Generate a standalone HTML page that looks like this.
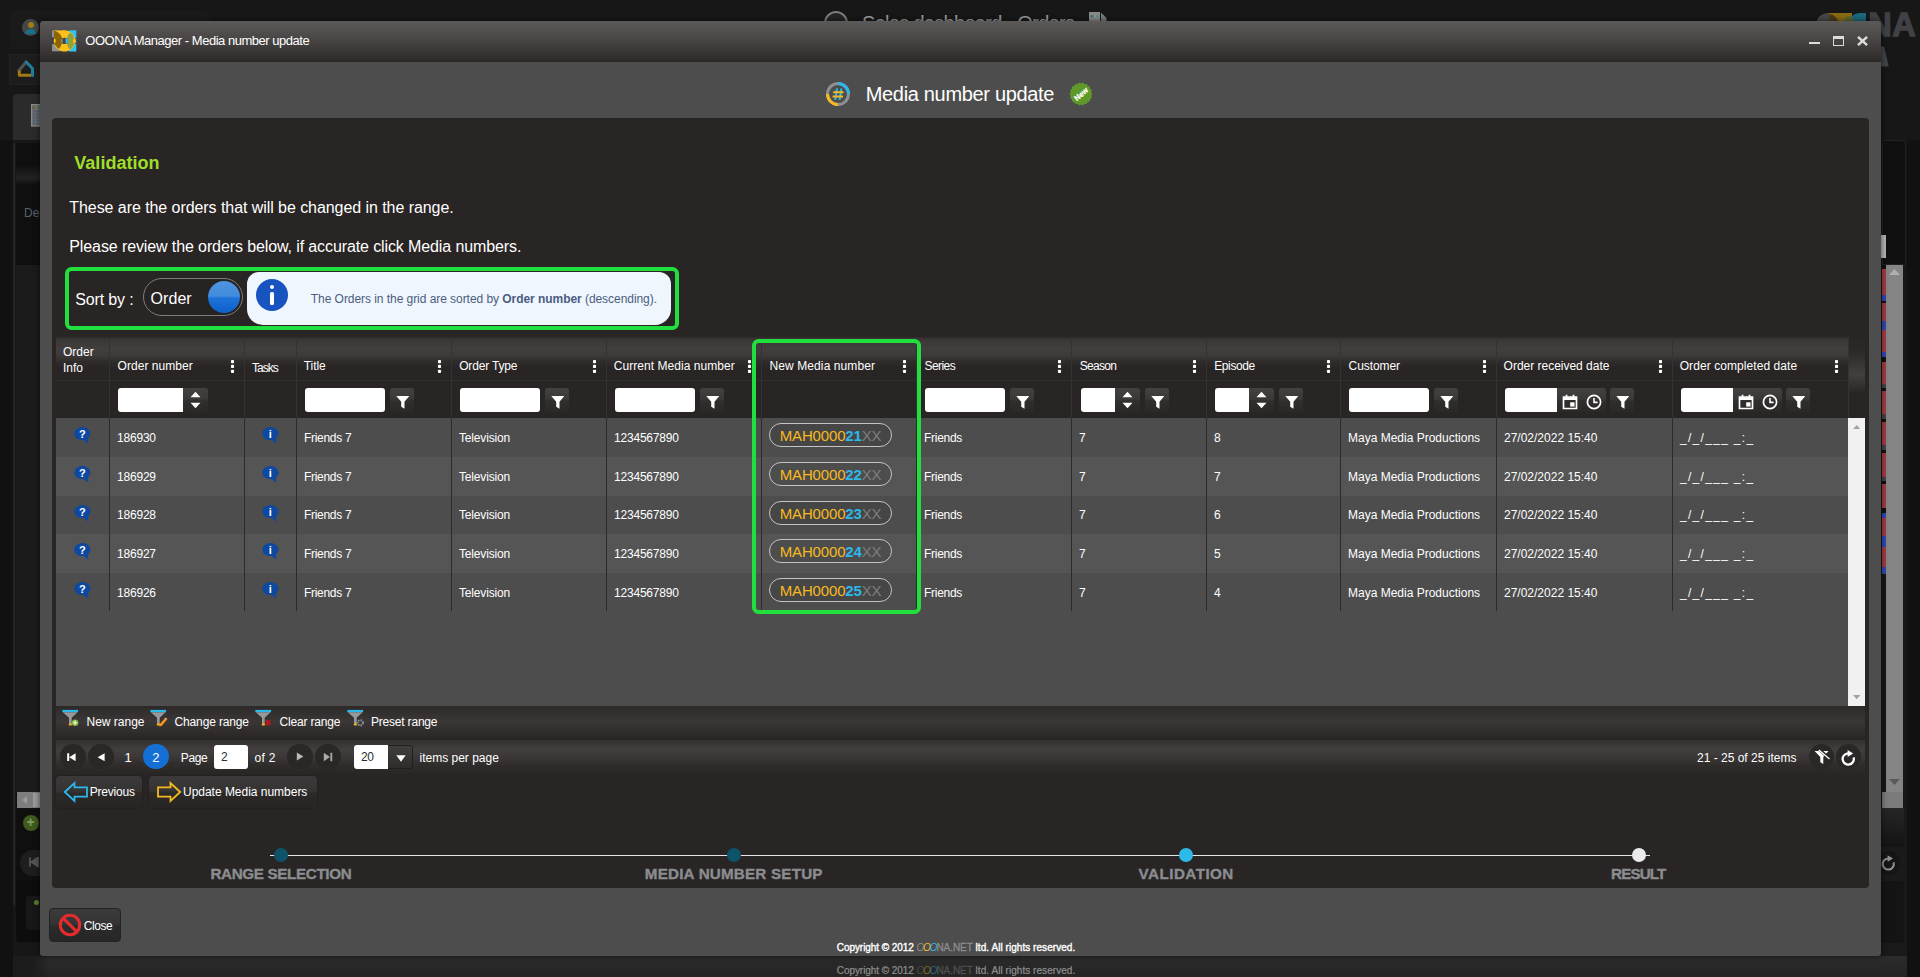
<!DOCTYPE html>
<html lang="en"><head><meta charset="utf-8"><title>OOONA Manager - Media number update</title>
<style>
html,body{margin:0;padding:0}
body{width:1920px;height:977px;overflow:hidden;background:#171717;font-family:"Liberation Sans",sans-serif;font-size:12px;color:#fff;position:relative;line-height:1}
div,span,svg{position:absolute;box-sizing:border-box}
span.t{white-space:pre;line-height:1}
b{font-weight:700}
.win{left:40px;top:21px;width:1841px;height:935px;background:#4d4d4d;border-radius:4px 4px 3px 3px;box-shadow:0 0 6px rgba(0,0,0,.6)}
.tbar{left:40px;top:21px;width:1841px;height:41px;border-radius:4px 4px 0 0;background:linear-gradient(#5c5a59 0%,#484544 45%,#2c2827 100%)}
.panel{left:52px;top:118px;width:1817px;height:770px;background:#292524;border-radius:4px}
.hdr{left:56px;top:337px;width:1809px;height:44px;background:linear-gradient(#2e2b2a 0%,#3b3837 7%,#413e3d 28%,#3d3a39 42%,#2f2c2b 56%,#292524 70%,#292524 100%)}
.frow{left:56px;top:381px;width:1809px;height:37px;background:#292524}
.content{left:56px;top:418px;width:1792px;height:288px;background:#4d4d4d}
.row{left:56px;width:1792px}
.vsb{left:1848px;top:418px;width:17px;height:288px;background:#f1f1f1}
.sep{width:1px;background:#2b2b2b}
.hsep{width:1px;background:#353231}
.h{font-size:12px;color:#fff}
.c{font-size:12px;color:#fff}
.inp{background:#fff;border-radius:3px;height:24px;top:388px}
.fb{width:24px;height:24px;top:388px;border-radius:3px;background:linear-gradient(#434241 0%,#3b3938 45%,#302e2d 55%,#2b2928 100%)}
.sp{width:25px;height:24px;top:388px;border-radius:0 3px 3px 0;background:linear-gradient(#434241 0%,#3b3938 45%,#302e2d 55%,#2b2928 100%)}
.pill{left:769px;width:123px;height:24px;border:1.3px solid #c4c4c4;border-radius:12px;background:rgba(0,0,0,.09)}
.pill span{font-size:15px;letter-spacing:-0.17px;left:9.8px;top:3.8px}
.s{position:static}.y{color:#f6b91f;position:static}.cy{color:#2cb8ea;position:static;font-weight:700}.gx{color:#7e7e7e;position:static}
.gbox{border:4.3px solid #21df3d;border-radius:6.5px}
.tool{left:56px;top:706px;width:1809px;height:34px;background:linear-gradient(#2c2928 0%,#3a3736 45%,#2e2b2a 80%,#282423 100%)}
.pager{left:56px;top:739.7px;width:1809px;height:35px;background:linear-gradient(#343130 0%,#413e3d 28%,#3c3938 45%,#2f2c2b 72%,#292524 100%)}
.pc{width:25.6px;height:25.6px;border-radius:50%;top:743.7px;background:#2a2726}
.btn{top:776px;height:31.5px;border-radius:4px;background:linear-gradient(#3b3939 0%,#363433 46%,#2c2a29 54%,#272423 100%);box-shadow:0 0 0 1px rgba(0,0,0,.12)}
.step{font-size:15.5px;font-weight:700;color:#8c8c8c;top:866px;letter-spacing:-0.3px}
.dot{width:14px;height:14px;border-radius:50%;top:848px}
</style></head>
<body>
<!-- dimmed page behind dialog -->
<div style="left:0;top:140px;width:13px;height:837px;background:#111"></div>
<div style="left:1907px;top:140px;width:13px;height:837px;background:#111"></div>
<div style="left:10px;top:10px;width:200px;height:40px;border-radius:8px;background:#1a1a1a"></div>
<div style="left:22px;top:19px;width:17px;height:17px;border-radius:50%;background:#454648"></div>
<div style="left:28px;top:22px;width:6px;height:6px;border-radius:50%;background:#a07a18"></div>
<div style="left:25px;top:29px;width:11px;height:5px;border-radius:5px 5px 0 0;background:#17718a"></div>
<div style="left:9px;top:54px;width:34px;height:31px;background:#1d1d1d;border:1px solid #222"></div>
<svg style="left:17px;top:60px" width="18" height="18" viewBox="0 0 18 18"><path d="M2 10.5L9.2 2" stroke="#4f5459" stroke-width="3" fill="none" stroke-linecap="round"/><path d="M9.2 2L15.5 8.5V15.5" stroke="#1f7f9c" stroke-width="3" fill="none" stroke-linejoin="round" stroke-linecap="round"/><path d="M2.3 10.5V15.3H14" stroke="#a07814" stroke-width="3" fill="none" stroke-linejoin="round"/></svg>
<div style="left:13px;top:94px;width:30px;height:46px;border-radius:4px 0 0 0;background:#2b2b2b"></div>
<svg style="left:30.5px;top:104px" width="10" height="23" viewBox="0 0 10 23"><rect x="0" y="0" width="10" height="22.6" fill="#8b8b8b"/><rect x="1" y="1" width="9" height="20.6" fill="#6f6f6f"/><rect x="1.6" y="2.8" width="2" height="2" fill="#55595e"/><rect x="4" y="2.8" width="2.4" height="2" fill="#a07814"/><rect x="6.8" y="2.8" width="3.2" height="2" fill="#1f7f9c"/><path d="M2 7.5H10M2 10.5H10M2 13.5H10M2 16.5H10M2 19.5H10" stroke="#4f5f74" stroke-width="1.8" stroke-dasharray="2.2 1"/></svg>
<div style="left:16px;top:143px;width:26px;height:762px;background:#0f0f0f;border-radius:3px 0 0 3px"></div>
<div style="left:16px;top:265px;width:26px;height:527px;background:#1b1b1b"></div>
<div style="left:13px;top:143px;width:2px;height:762px;background:#242424"></div>
<div style="left:16px;top:165px;width:26px;height:19px;background:linear-gradient(#101010,#232323 70%,#111)"></div>
<span class="t" style="left:24px;top:207px;font-size:12px;color:#56606e">De</span>
<div style="left:17px;top:792px;width:23px;height:16px;background:#7d7d7d"></div>
<svg style="left:21px;top:795px" width="8" height="10"><path d="M6 1 L1.5 5 L6 9Z" fill="#9c9c9c"/></svg>
<div style="left:33px;top:793px;width:7px;height:14px;background:#9a9a9a"></div>
<div style="left:23px;top:815px;width:16px;height:16px;border-radius:50%;background:#3e5a1e"></div>
<span class="t" style="left:26.5px;top:815px;font-size:14px;font-weight:700;color:#7f9a5a">+</span>
<div style="left:20px;top:850px;width:22px;height:26px;border-radius:13px 0 0 13px;background:#1e1e1e"></div>
<svg style="left:29px;top:857px" width="10" height="10"><path d="M1 0.5V9.5M9 0.5L2.5 5L9 9.5Z" stroke="#555" stroke-width="1.8" fill="#555"/></svg>
<div style="left:16px;top:880px;width:26px;height:62px;background:#0d0d0d;border-radius:0 0 0 4px"></div>
<div style="left:26px;top:896px;width:16px;height:34px;background:#181818;border-radius:3px 0 0 3px"></div>
<div style="left:34px;top:900px;width:5px;height:5px;border-radius:50%;background:#5c7a2c"></div>
<span class="t" style="left:862.0px;top:12.8px;font-size:20px;letter-spacing:-0.696px;color:#9a9a9a;">Sales dashboard - Orders</span>
<div style="left:824px;top:11px;width:24px;height:24px;border-radius:50%;border:2px solid #7c7c7c;background:#242424"></div>
<svg style="left:1088.5px;top:11.5px" width="18" height="12" viewBox="0 0 18 12"><path d="M0 0H11V12H0Z" fill="#8a8a8a"/><path d="M12 0.5L17.5 6V12H12Z" fill="#7a7a7a"/><rect x="1.5" y="3" width="3" height="2.4" fill="#4a6a8a"/><rect x="5" y="3" width="2" height="2.4" fill="#b8962a"/><rect x="7.4" y="3" width="2.4" height="2.4" fill="#2a9ac0"/></svg>
<div style="left:1815.8px;top:12.9px;width:16px;height:12px;border-radius:14px 0 0 0;background:#46484b"></div>
<div style="left:1829px;top:12.9px;width:23px;height:12px;background:#8a6a14"></div>
<div style="left:1829px;top:13.5px;width:9px;height:12px;border-radius:0 12px 0 0;background:#4a3c1c"></div>
<div style="left:1848px;top:12.9px;width:18.3px;height:12px;border-radius:12px 0 0 0;background:#1d697e"></div>
<div style="left:1844.5px;top:15.5px;width:8px;height:8px;border-radius:4px 4px 0 0;background:#5d6a28"></div>
<span class="t" style="left:1868.2px;top:9.3px;font-size:32.5px;font-weight:700;color:#3f4144;letter-spacing:0.6px;-webkit-text-stroke:1.3px #3f4144">NA</span>
<svg style="left:1881px;top:46px" width="10" height="22"><path d="M0 0.5H3L7.8 20.5H0Z" fill="#424447"/></svg>
<div style="left:1882px;top:140px;width:24px;height:125px;background:#101010;border:1px solid #222;border-radius:3px 3px 0 0"></div>
<div style="left:1881px;top:235px;width:5px;height:23px;background:#b5b5b5"></div>
<div style="left:1882px;top:265.2px;width:4px;height:3.4px;background:#111"></div>
<div style="left:1882px;top:268.6px;width:4px;height:26.4px;background:#a23b40"></div>
<div style="left:1882px;top:295.0px;width:4px;height:5.8px;background:#2e48b4"></div>
<div style="left:1882px;top:300.8px;width:4px;height:1.7px;background:#111"></div>
<div style="left:1882px;top:302.5px;width:4px;height:18.6px;background:#a23b40"></div>
<div style="left:1882px;top:321.1px;width:4px;height:9.2px;background:#2e48b4"></div>
<div style="left:1882px;top:330.3px;width:4px;height:21.4px;background:#a23b40"></div>
<div style="left:1882px;top:351.6px;width:4px;height:5.1px;background:#2e48b4"></div>
<div style="left:1882px;top:356.7px;width:4px;height:5.1px;background:#111"></div>
<div style="left:1882px;top:361.8px;width:4px;height:22.0px;background:#a23b40"></div>
<div style="left:1882px;top:383.8px;width:4px;height:4.1px;background:#444"></div>
<div style="left:1882px;top:387.9px;width:4px;height:2.7px;background:#111"></div>
<div style="left:1882px;top:390.6px;width:4px;height:23.7px;background:#a23b40"></div>
<div style="left:1882px;top:414.3px;width:4px;height:5.1px;background:#444"></div>
<div style="left:1882px;top:419.4px;width:4px;height:2.4px;background:#111"></div>
<div style="left:1882px;top:421.8px;width:4px;height:23.1px;background:#a23b40"></div>
<div style="left:1882px;top:444.8px;width:4px;height:5.1px;background:#444"></div>
<div style="left:1882px;top:449.9px;width:4px;height:3.4px;background:#111"></div>
<div style="left:1882px;top:453.3px;width:4px;height:23.7px;background:#a23b40"></div>
<div style="left:1882px;top:477.0px;width:4px;height:4.4px;background:#444"></div>
<div style="left:1882px;top:481.4px;width:4px;height:2.7px;background:#111"></div>
<div style="left:1882px;top:484.2px;width:4px;height:23.4px;background:#a23b40"></div>
<div style="left:1882px;top:507.5px;width:4px;height:5.1px;background:#111"></div>
<div style="left:1882px;top:512.6px;width:4px;height:5.1px;background:#2e48b4"></div>
<div style="left:1882px;top:517.7px;width:4px;height:18.6px;background:#a23b40"></div>
<div style="left:1882px;top:536.4px;width:4px;height:10.2px;background:#2e48b4"></div>
<div style="left:1882px;top:546.5px;width:4px;height:20.3px;background:#a23b40"></div>
<div style="left:1882px;top:566.9px;width:4px;height:6.8px;background:#2e48b4"></div>
<div style="left:1886px;top:265px;width:16.8px;height:543px;background:#858585"></div>
<div style="left:1882px;top:792.3px;width:20.8px;height:16px;background:#7b7b7b"></div>
<svg style="left:1889px;top:269px" width="11" height="6"><path d="M0 6L5.5 0L11 6Z" fill="#b0b0b0"/></svg>
<svg style="left:1889px;top:779px" width="11" height="6"><path d="M0 0L5.5 6L11 0Z" fill="#5a5a5a"/></svg>
<div style="left:1881px;top:808.3px;width:26px;height:148px;background:#1a1a1a"></div>
<div style="left:1881px;top:808.3px;width:23px;height:38.5px;background:linear-gradient(#262626,#141414)"></div>
<div style="left:1876px;top:851.3px;width:24px;height:24px;border-radius:50%;background:#151515"></div>
<svg style="left:1879.5px;top:854.5px" width="17" height="17" viewBox="0 0 17 17"><path d="M13.6 7.4A5.6 5.6 0 1 1 8 3.4" fill="none" stroke="#8f8f93" stroke-width="2"/><path d="M7.6 0.2L13 3.6L7.6 6.8Z" fill="#8f8f93"/></svg>
<div style="left:1881px;top:881px;width:22.5px;height:61.7px;background:#141414;border-radius:0 3px 3px 0"></div>
<div style="left:13px;top:956px;width:1894px;height:21px;background:linear-gradient(#2c2c2c,#242424)"></div>
<div style="left:13px;top:956px;width:36px;height:21px;background:linear-gradient(90deg,#1c1c1c 0%,#1d1d1d 60%,rgba(29,29,29,0) 100%)"></div>
<span class="t" style="left:836.8px;top:966px;font-size:10px;color:#909090;letter-spacing:-0.067px;-webkit-text-stroke:.2px #909090">Copyright © 2012 <i style="color:#4a4a4a;letter-spacing:-1.1px;-webkit-text-stroke:0">O<span class="y" style="color:#8a6a14">O</span><span class="y" style="color:#1d6d8a">O</span></i><span class="y" style="color:#505050;-webkit-text-stroke:.3px #505050">NA.NET</span><span class="s" style="letter-spacing:0.053px"> ltd. All rights reserved.</span></span>
<div class="win"></div><div class="tbar"></div>
<svg style="left:52px;top:30px" width="25" height="22" viewBox="0 0 25 22"><rect x="0" y="0.5" width="8" height="20.8" fill="#8d8f92"/><rect x="0" y="7.4" width="2.2" height="6.7" fill="#3e3d45"/><rect x="17" y="0.3" width="7.3" height="21.2" fill="#2cc6f5"/><rect x="22.6" y="8" width="1.7" height="6" fill="#3e3d45"/><circle cx="12.4" cy="10.9" r="10.7" fill="#fcc01f"/><path d="M2 0.5H12V8H2Z" fill="#fcc01f"/><path d="M2 0.6C7 2 10.2 6 10.2 9.8C10.2 14 8.5 17 6.8 18.9C4 16.5 2.2 14.5 2 13Z" fill="#8a6500"/><path d="M2 8.3C3.4 8.8 3.8 9.8 3.8 10.8C3.8 11.8 3.4 12.8 2 13.2Z" fill="#fcc01f"/><path d="M18.5 2.6C21.6 5 22.4 8.5 22.4 10.9C22.4 14 21.2 17.3 18.3 19.6C15.6 17.2 14.6 14 14.6 10.9C14.6 7.4 15.9 4.6 18.5 2.6Z" fill="#95a03a"/><ellipse cx="22.5" cy="10.9" rx="1.5" ry="2.6" fill="#fcc01f"/><ellipse cx="12.5" cy="10.95" rx="3.6" ry="3.15" fill="#4a4543"/><path d="M10.6 8.3A3.6 3.15 0 0 0 10.6 13.6Z" fill="#8d8f92"/><path d="M13.7 8A3.6 3.15 0 0 1 15.6 9.3C16 10.4 16 11.5 15.6 12.6A3.6 3.15 0 0 1 13.7 13.9Z" fill="#2cc6f5"/></svg>
<span class="t" style="left:85.3px;top:34px;font-size:13px;letter-spacing:-0.477px;">OOONA Manager - Media number update</span>
<div style="left:1809px;top:41.8px;width:11.1px;height:2.4px;background:#dcdcdc"></div>
<div style="left:1833px;top:36px;width:11.1px;height:9.9px;border:1.6px solid #dcdcdc;border-top-width:3px"></div>
<svg style="left:1857px;top:36px" width="11" height="10" viewBox="0 0 11 10"><path d="M1 0.9L10.1 9.1M10.1 0.9L1 9.1" stroke="#dcdcdc" stroke-width="2.5"/></svg>
<svg style="left:825px;top:82px" width="25" height="24" viewBox="0 0 25 24"><circle cx="13" cy="12.1" r="10.5" fill="none" stroke="#8d8f92" stroke-width="3"/><path d="M13 1.6A10.5 10.5 0 0 1 23.5 12.1" fill="none" stroke="#2cb8ea" stroke-width="3"/><path d="M13 22.6A10.5 10.5 0 0 1 2.5 12.1" fill="none" stroke="#f6b91f" stroke-width="3"/><path d="M12 6.3L10.2 17.9M16.4 6.3L14.6 17.9" stroke="#2cb8ea" stroke-width="2"/><path d="M8.2 10.2H18.6M7.6 14.4H18" stroke="#f6b91f" stroke-width="2"/></svg>
<span class="t" style="left:865.7px;top:83.5px;font-size:20px;letter-spacing:-0.321px;">Media number update</span>
<svg style="left:1069px;top:82px" width="24" height="24" viewBox="0 0 24 24"><polygon points="23.60,12.00 22.24,13.81 22.90,15.97 21.01,17.20 20.89,19.46 18.68,19.97 17.80,22.05 15.56,21.77 14.01,23.42 12.00,22.40 9.99,23.42 8.44,21.77 6.20,22.05 5.32,19.97 3.11,19.46 2.99,17.20 1.10,15.97 1.76,13.81 0.40,12.00 1.76,10.19 1.10,8.03 2.99,6.80 3.11,4.54 5.32,4.03 6.20,1.95 8.44,2.23 9.99,0.58 12.00,1.60 14.01,0.58 15.56,2.23 17.80,1.95 18.68,4.03 20.89,4.54 21.01,6.80 22.90,8.03 22.24,10.19" fill="#5f9a28"/><text x="12" y="14.8" transform="rotate(-42 12 12)" text-anchor="middle" font-family="Liberation Sans, sans-serif" font-size="7.6" font-weight="700" fill="#fff" stroke="#fff" stroke-width="0.3">New</text></svg>
<div class="panel"></div>
<span class="t" style="left:74.3px;top:154px;font-size:18px;letter-spacing:0.020px;font-weight:700;color:#9fdf2b;">Validation</span>
<span class="t" style="left:69.3px;top:200px;font-size:16px;letter-spacing:-0.063px;">These are the orders that will be changed in the range.</span>
<span class="t" style="left:69.3px;top:239px;font-size:16px;letter-spacing:-0.108px;">Please review the orders below, if accurate click Media numbers.</span>
<div class="gbox" style="left:65px;top:267px;width:614px;height:63px"></div>
<span class="t" style="left:75.3px;top:292px;font-size:16px;letter-spacing:-0.147px;">Sort by :</span>
<div style="left:143px;top:278px;width:100px;height:38px;border:1px solid #7d7d7d;border-radius:19px;background:#262322"></div>
<span class="t" style="left:150.5px;top:290.6px;font-size:16px;letter-spacing:0.075px;">Order</span>
<div style="left:208px;top:281px;width:32px;height:32px;border-radius:50%;background:linear-gradient(#4e95e1 0%,#418bda 47%,#1c73d7 53%,#0e62cb 100%)"></div>
<div style="left:247px;top:271.5px;width:424px;height:53.7px;background:#eff6fe;border-radius:12px 12px 16px 16px"></div>
<div style="left:256px;top:279px;width:32px;height:32px;border-radius:50%;background:#1754c0"></div>
<div style="left:270px;top:285px;width:4px;height:4px;border-radius:50%;background:#fff"></div>
<div style="left:270.2px;top:291.5px;width:3.6px;height:13px;border-radius:1.5px;background:#fff"></div>
<span class="t" style="left:310.8px;top:293px;font-size:12px;color:#4c5d80;letter-spacing:-0.053px">The Orders in the grid are sorted by <b>Order number</b> (descending).</span>
<div class="hdr"></div><div class="frow"></div>
<div style="left:56px;top:380px;width:1792px;height:1px;background:#302d2c"></div>
<div class="content"></div>
<div class="row" style="top:418px;height:39px;background:#4d4d4d"></div>
<div class="row" style="top:457px;height:39px;background:#555555"></div>
<div class="row" style="top:496px;height:38px;background:#4d4d4d"></div>
<div class="row" style="top:534px;height:39px;background:#555555"></div>
<div class="row" style="top:573px;height:38px;background:#4d4d4d"></div>
<div class="vsb"></div>
<svg style="left:1852.9px;top:425px" width="7.4" height="4.2" viewBox="0 0 7.4 4.2"><path d="M0 4.2L3.7 0L7.4 4.2Z" fill="#a3a3a3"/></svg>
<svg style="left:1852.9px;top:694.5px" width="7.4" height="4.2" viewBox="0 0 7.4 4.2"><path d="M0 0L3.7 4.2L7.4 0Z" fill="#a3a3a3"/></svg>
<div class="hsep" style="left:109px;top:337px;height:81px"></div>
<div class="sep" style="left:109px;top:418px;height:193px"></div>
<div class="hsep" style="left:244px;top:337px;height:81px"></div>
<div class="sep" style="left:244px;top:418px;height:193px"></div>
<div class="hsep" style="left:296px;top:337px;height:81px"></div>
<div class="sep" style="left:296px;top:418px;height:193px"></div>
<div class="hsep" style="left:451px;top:337px;height:81px"></div>
<div class="sep" style="left:451px;top:418px;height:193px"></div>
<div class="hsep" style="left:606px;top:337px;height:81px"></div>
<div class="sep" style="left:606px;top:418px;height:193px"></div>
<div class="hsep" style="left:761px;top:337px;height:81px"></div>
<div class="sep" style="left:761px;top:418px;height:193px"></div>
<div class="hsep" style="left:916px;top:337px;height:81px"></div>
<div class="sep" style="left:916px;top:418px;height:193px"></div>
<div class="hsep" style="left:1071px;top:337px;height:81px"></div>
<div class="sep" style="left:1071px;top:418px;height:193px"></div>
<div class="hsep" style="left:1206px;top:337px;height:81px"></div>
<div class="sep" style="left:1206px;top:418px;height:193px"></div>
<div class="hsep" style="left:1340px;top:337px;height:81px"></div>
<div class="sep" style="left:1340px;top:418px;height:193px"></div>
<div class="hsep" style="left:1496px;top:337px;height:81px"></div>
<div class="sep" style="left:1496px;top:418px;height:193px"></div>
<div class="hsep" style="left:1672px;top:337px;height:81px"></div>
<div class="sep" style="left:1672px;top:418px;height:193px"></div>
<div style="left:1848px;top:337px;width:17px;height:81px;background:linear-gradient(#292524 0%,#2c2928 18%,#423f3e 46%,#383534 56%,#292524 70%,#292524 100%)"></div>
<div class="hsep" style="left:1848px;top:337px;height:81px"></div>
<span class="t h" style="left:63px;top:344px;line-height:16.3px">Order<br>Info</span>
<span class="t" style="left:117.5px;top:359.5px;font-size:12px;letter-spacing:0.055px;">Order number</span>
<svg style="left:229.9px;top:360.2px" width="5" height="14" viewBox="0 0 5 14"><rect x="0.95" y="0" width="3.1" height="3.2" rx="0.9" fill="#fff"/><rect x="0.95" y="4.85" width="3.1" height="3.2" rx="0.9" fill="#fff"/><rect x="0.95" y="9.7" width="3.1" height="3.2" rx="0.9" fill="#fff"/></svg>
<div class="inp" style="left:118px;width:66px;border-radius:3px 0 0 3px"></div><div class="sp" style="left:183px"><svg style="left:7px;top:3px" width="11" height="18" viewBox="0 0 11 18"><path d="M0.5 6.2L5.5 0.8L10.5 6.2Z" fill="#fff"/><path d="M0.5 11.8L5.5 17.2L10.5 11.8Z" fill="#fff"/></svg></div>
<span class="t" style="left:252.0px;top:361.5px;font-size:12px;letter-spacing:-0.994px;">Tasks</span>
<span class="t" style="left:303.7px;top:359.5px;font-size:12px;letter-spacing:-0.031px;">Title</span>
<svg style="left:436.9px;top:360.2px" width="5" height="14" viewBox="0 0 5 14"><rect x="0.95" y="0" width="3.1" height="3.2" rx="0.9" fill="#fff"/><rect x="0.95" y="4.85" width="3.1" height="3.2" rx="0.9" fill="#fff"/><rect x="0.95" y="9.7" width="3.1" height="3.2" rx="0.9" fill="#fff"/></svg>
<div class="inp" style="left:305px;width:80px"></div><div class="fb" style="left:390px"><svg style="left:5.8px;top:7px" width="14" height="14" viewBox="0 0 14 14"><path d="M0.3 0.9H13.3L8.5 6.8V13.7L5.2 11.7V6.8Z" fill="#fff"/></svg></div>
<span class="t" style="left:459.2px;top:359.5px;font-size:12px;letter-spacing:-0.168px;">Order Type</span>
<svg style="left:591.9px;top:360.2px" width="5" height="14" viewBox="0 0 5 14"><rect x="0.95" y="0" width="3.1" height="3.2" rx="0.9" fill="#fff"/><rect x="0.95" y="4.85" width="3.1" height="3.2" rx="0.9" fill="#fff"/><rect x="0.95" y="9.7" width="3.1" height="3.2" rx="0.9" fill="#fff"/></svg>
<div class="inp" style="left:460px;width:80px"></div><div class="fb" style="left:545px"><svg style="left:5.8px;top:7px" width="14" height="14" viewBox="0 0 14 14"><path d="M0.3 0.9H13.3L8.5 6.8V13.7L5.2 11.7V6.8Z" fill="#fff"/></svg></div>
<span class="t" style="left:613.7px;top:359.5px;font-size:12px;letter-spacing:0.050px;">Current Media number</span>
<svg style="left:746.9px;top:360.2px" width="5" height="14" viewBox="0 0 5 14"><rect x="0.95" y="0" width="3.1" height="3.2" rx="0.9" fill="#fff"/><rect x="0.95" y="4.85" width="3.1" height="3.2" rx="0.9" fill="#fff"/><rect x="0.95" y="9.7" width="3.1" height="3.2" rx="0.9" fill="#fff"/></svg>
<div class="inp" style="left:615px;width:80px"></div><div class="fb" style="left:700px"><svg style="left:5.8px;top:7px" width="14" height="14" viewBox="0 0 14 14"><path d="M0.3 0.9H13.3L8.5 6.8V13.7L5.2 11.7V6.8Z" fill="#fff"/></svg></div>
<span class="t" style="left:769.5px;top:359.5px;font-size:12px;letter-spacing:0.097px;">New Media number</span>
<svg style="left:901.9px;top:360.2px" width="5" height="14" viewBox="0 0 5 14"><rect x="0.95" y="0" width="3.1" height="3.2" rx="0.9" fill="#fff"/><rect x="0.95" y="4.85" width="3.1" height="3.2" rx="0.9" fill="#fff"/><rect x="0.95" y="9.7" width="3.1" height="3.2" rx="0.9" fill="#fff"/></svg>
<span class="t" style="left:924.6px;top:359.5px;font-size:12px;letter-spacing:-0.583px;">Series</span>
<svg style="left:1056.9px;top:360.2px" width="5" height="14" viewBox="0 0 5 14"><rect x="0.95" y="0" width="3.1" height="3.2" rx="0.9" fill="#fff"/><rect x="0.95" y="4.85" width="3.1" height="3.2" rx="0.9" fill="#fff"/><rect x="0.95" y="9.7" width="3.1" height="3.2" rx="0.9" fill="#fff"/></svg>
<div class="inp" style="left:925px;width:80px"></div><div class="fb" style="left:1010px"><svg style="left:5.8px;top:7px" width="14" height="14" viewBox="0 0 14 14"><path d="M0.3 0.9H13.3L8.5 6.8V13.7L5.2 11.7V6.8Z" fill="#fff"/></svg></div>
<span class="t" style="left:1079.7px;top:359.5px;font-size:12px;letter-spacing:-0.680px;">Season</span>
<svg style="left:1191.9px;top:360.2px" width="5" height="14" viewBox="0 0 5 14"><rect x="0.95" y="0" width="3.1" height="3.2" rx="0.9" fill="#fff"/><rect x="0.95" y="4.85" width="3.1" height="3.2" rx="0.9" fill="#fff"/><rect x="0.95" y="9.7" width="3.1" height="3.2" rx="0.9" fill="#fff"/></svg>
<div class="inp" style="left:1081px;width:35px;border-radius:3px 0 0 3px"></div><div class="sp" style="left:1115px"><svg style="left:7px;top:3px" width="11" height="18" viewBox="0 0 11 18"><path d="M0.5 6.2L5.5 0.8L10.5 6.2Z" fill="#fff"/><path d="M0.5 11.8L5.5 17.2L10.5 11.8Z" fill="#fff"/></svg></div><div class="fb" style="left:1145px"><svg style="left:5.8px;top:7px" width="14" height="14" viewBox="0 0 14 14"><path d="M0.3 0.9H13.3L8.5 6.8V13.7L5.2 11.7V6.8Z" fill="#fff"/></svg></div>
<span class="t" style="left:1214.2px;top:359.5px;font-size:12px;letter-spacing:-0.378px;">Episode</span>
<svg style="left:1325.9px;top:360.2px" width="5" height="14" viewBox="0 0 5 14"><rect x="0.95" y="0" width="3.1" height="3.2" rx="0.9" fill="#fff"/><rect x="0.95" y="4.85" width="3.1" height="3.2" rx="0.9" fill="#fff"/><rect x="0.95" y="9.7" width="3.1" height="3.2" rx="0.9" fill="#fff"/></svg>
<div class="inp" style="left:1215px;width:35px;border-radius:3px 0 0 3px"></div><div class="sp" style="left:1249px"><svg style="left:7px;top:3px" width="11" height="18" viewBox="0 0 11 18"><path d="M0.5 6.2L5.5 0.8L10.5 6.2Z" fill="#fff"/><path d="M0.5 11.8L5.5 17.2L10.5 11.8Z" fill="#fff"/></svg></div><div class="fb" style="left:1279px"><svg style="left:5.8px;top:7px" width="14" height="14" viewBox="0 0 14 14"><path d="M0.3 0.9H13.3L8.5 6.8V13.7L5.2 11.7V6.8Z" fill="#fff"/></svg></div>
<span class="t" style="left:1348.6px;top:359.5px;font-size:12px;letter-spacing:-0.088px;">Customer</span>
<svg style="left:1481.9px;top:360.2px" width="5" height="14" viewBox="0 0 5 14"><rect x="0.95" y="0" width="3.1" height="3.2" rx="0.9" fill="#fff"/><rect x="0.95" y="4.85" width="3.1" height="3.2" rx="0.9" fill="#fff"/><rect x="0.95" y="9.7" width="3.1" height="3.2" rx="0.9" fill="#fff"/></svg>
<div class="inp" style="left:1349px;width:80px"></div><div class="fb" style="left:1434px"><svg style="left:5.8px;top:7px" width="14" height="14" viewBox="0 0 14 14"><path d="M0.3 0.9H13.3L8.5 6.8V13.7L5.2 11.7V6.8Z" fill="#fff"/></svg></div>
<span class="t" style="left:1503.6px;top:359.5px;font-size:12px;letter-spacing:-0.014px;">Order received date</span>
<svg style="left:1657.9px;top:360.2px" width="5" height="14" viewBox="0 0 5 14"><rect x="0.95" y="0" width="3.1" height="3.2" rx="0.9" fill="#fff"/><rect x="0.95" y="4.85" width="3.1" height="3.2" rx="0.9" fill="#fff"/><rect x="0.95" y="9.7" width="3.1" height="3.2" rx="0.9" fill="#fff"/></svg>
<div class="inp" style="left:1505px;width:52px;border-radius:3px 0 0 3px"></div><div class="sp" style="left:1557px;width:49px"></div><svg style="left:1562px;top:393.7px" width="16" height="16" viewBox="0 0 16 16"><path d="M1.5 3.2H14.5V14.5H1.5Z" fill="none" stroke="#fff" stroke-width="1.7"/><path d="M1.5 3.2H14.5V6H1.5Z" fill="#fff"/><path d="M4.5 0.8V3.5M11.5 0.8V3.5" stroke="#fff" stroke-width="1.8"/><rect x="8.2" y="8.3" width="4.3" height="4.3" fill="#fff"/></svg><svg style="left:1586px;top:393.7px" width="16" height="16" viewBox="0 0 16 16"><circle cx="8" cy="8" r="6.6" fill="none" stroke="#fff" stroke-width="1.7"/><path d="M8 4V8.4H11.6" fill="none" stroke="#fff" stroke-width="1.6"/></svg><div class="fb" style="left:1610px"><svg style="left:5.8px;top:7px" width="14" height="14" viewBox="0 0 14 14"><path d="M0.3 0.9H13.3L8.5 6.8V13.7L5.2 11.7V6.8Z" fill="#fff"/></svg></div>
<span class="t" style="left:1679.7px;top:359.5px;font-size:12px;letter-spacing:0.076px;">Order completed date</span>
<svg style="left:1833.9px;top:360.2px" width="5" height="14" viewBox="0 0 5 14"><rect x="0.95" y="0" width="3.1" height="3.2" rx="0.9" fill="#fff"/><rect x="0.95" y="4.85" width="3.1" height="3.2" rx="0.9" fill="#fff"/><rect x="0.95" y="9.7" width="3.1" height="3.2" rx="0.9" fill="#fff"/></svg>
<div class="inp" style="left:1681px;width:52px;border-radius:3px 0 0 3px"></div><div class="sp" style="left:1733px;width:49px"></div><svg style="left:1738px;top:393.7px" width="16" height="16" viewBox="0 0 16 16"><path d="M1.5 3.2H14.5V14.5H1.5Z" fill="none" stroke="#fff" stroke-width="1.7"/><path d="M1.5 3.2H14.5V6H1.5Z" fill="#fff"/><path d="M4.5 0.8V3.5M11.5 0.8V3.5" stroke="#fff" stroke-width="1.8"/><rect x="8.2" y="8.3" width="4.3" height="4.3" fill="#fff"/></svg><svg style="left:1762px;top:393.7px" width="16" height="16" viewBox="0 0 16 16"><circle cx="8" cy="8" r="6.6" fill="none" stroke="#fff" stroke-width="1.7"/><path d="M8 4V8.4H11.6" fill="none" stroke="#fff" stroke-width="1.6"/></svg><div class="fb" style="left:1786px"><svg style="left:5.8px;top:7px" width="14" height="14" viewBox="0 0 14 14"><path d="M0.3 0.9H13.3L8.5 6.8V13.7L5.2 11.7V6.8Z" fill="#fff"/></svg></div>
<svg style="left:73.5px;top:426.70px" width="18" height="18" viewBox="0 0 18 18"><ellipse cx="8.4" cy="6.6" rx="8.15" ry="6.5" fill="#0e489f"/><path d="M9 12.5L14.3 16.8L13.8 9.5Z" fill="#0e489f"/><text x="8.4" y="10.5" text-anchor="middle" font-family="Liberation Sans, sans-serif" font-size="11" font-weight="700" fill="#fff">?</text></svg>
<svg style="left:261.5px;top:426.70px" width="18" height="18" viewBox="0 0 18 18"><ellipse cx="8.4" cy="6.6" rx="8.15" ry="6.5" fill="#0e489f"/><path d="M9 12.5L14.3 16.8L13.8 9.5Z" fill="#0e489f"/><text x="8.4" y="10.5" text-anchor="middle" font-family="Liberation Sans, sans-serif" font-size="11" font-weight="700" fill="#fff">i</text></svg>
<span class="t c" style="left:117px;top:432px;letter-spacing:-0.2px">186930</span>
<span class="t c" style="left:304px;top:432px;letter-spacing:-0.3px">Friends 7</span>
<span class="t c" style="left:459px;top:432px;letter-spacing:-0.17px">Television</span>
<span class="t c" style="left:614px;top:432px;letter-spacing:-0.2px">1234567890</span>
<span class="t c" style="left:924px;top:432px;letter-spacing:-0.28px">Friends</span>
<span class="t c" style="left:1079px;top:432px;letter-spacing:0">7</span>
<span class="t c" style="left:1214px;top:432px;letter-spacing:0">8</span>
<span class="t c" style="left:1348px;top:432px;letter-spacing:0">Maya Media Productions</span>
<span class="t c" style="left:1504px;top:432px;letter-spacing:0">27/02/2022 15:40</span>
<span class="t c" style="left:1680px;top:432px;letter-spacing:1.3px">_/_/___ _:_</span>
<div class="pill" style="top:423.00px"><span class="t"><span class="y">MAH0000</span><span class="cy">21</span><span class="gx">XX</span></span></div>
<svg style="left:73.5px;top:465.70px" width="18" height="18" viewBox="0 0 18 18"><ellipse cx="8.4" cy="6.6" rx="8.15" ry="6.5" fill="#0e489f"/><path d="M9 12.5L14.3 16.8L13.8 9.5Z" fill="#0e489f"/><text x="8.4" y="10.5" text-anchor="middle" font-family="Liberation Sans, sans-serif" font-size="11" font-weight="700" fill="#fff">?</text></svg>
<svg style="left:261.5px;top:465.70px" width="18" height="18" viewBox="0 0 18 18"><ellipse cx="8.4" cy="6.6" rx="8.15" ry="6.5" fill="#0e489f"/><path d="M9 12.5L14.3 16.8L13.8 9.5Z" fill="#0e489f"/><text x="8.4" y="10.5" text-anchor="middle" font-family="Liberation Sans, sans-serif" font-size="11" font-weight="700" fill="#fff">i</text></svg>
<span class="t c" style="left:117px;top:471px;letter-spacing:-0.2px">186929</span>
<span class="t c" style="left:304px;top:471px;letter-spacing:-0.3px">Friends 7</span>
<span class="t c" style="left:459px;top:471px;letter-spacing:-0.17px">Television</span>
<span class="t c" style="left:614px;top:471px;letter-spacing:-0.2px">1234567890</span>
<span class="t c" style="left:924px;top:471px;letter-spacing:-0.28px">Friends</span>
<span class="t c" style="left:1079px;top:471px;letter-spacing:0">7</span>
<span class="t c" style="left:1214px;top:471px;letter-spacing:0">7</span>
<span class="t c" style="left:1348px;top:471px;letter-spacing:0">Maya Media Productions</span>
<span class="t c" style="left:1504px;top:471px;letter-spacing:0">27/02/2022 15:40</span>
<span class="t c" style="left:1680px;top:471px;letter-spacing:1.3px">_/_/___ _:_</span>
<div class="pill" style="top:462.00px"><span class="t"><span class="y">MAH0000</span><span class="cy">22</span><span class="gx">XX</span></span></div>
<svg style="left:73.5px;top:504.70px" width="18" height="18" viewBox="0 0 18 18"><ellipse cx="8.4" cy="6.6" rx="8.15" ry="6.5" fill="#0e489f"/><path d="M9 12.5L14.3 16.8L13.8 9.5Z" fill="#0e489f"/><text x="8.4" y="10.5" text-anchor="middle" font-family="Liberation Sans, sans-serif" font-size="11" font-weight="700" fill="#fff">?</text></svg>
<svg style="left:261.5px;top:504.70px" width="18" height="18" viewBox="0 0 18 18"><ellipse cx="8.4" cy="6.6" rx="8.15" ry="6.5" fill="#0e489f"/><path d="M9 12.5L14.3 16.8L13.8 9.5Z" fill="#0e489f"/><text x="8.4" y="10.5" text-anchor="middle" font-family="Liberation Sans, sans-serif" font-size="11" font-weight="700" fill="#fff">i</text></svg>
<span class="t c" style="left:117px;top:509px;letter-spacing:-0.2px">186928</span>
<span class="t c" style="left:304px;top:509px;letter-spacing:-0.3px">Friends 7</span>
<span class="t c" style="left:459px;top:509px;letter-spacing:-0.17px">Television</span>
<span class="t c" style="left:614px;top:509px;letter-spacing:-0.2px">1234567890</span>
<span class="t c" style="left:924px;top:509px;letter-spacing:-0.28px">Friends</span>
<span class="t c" style="left:1079px;top:509px;letter-spacing:0">7</span>
<span class="t c" style="left:1214px;top:509px;letter-spacing:0">6</span>
<span class="t c" style="left:1348px;top:509px;letter-spacing:0">Maya Media Productions</span>
<span class="t c" style="left:1504px;top:509px;letter-spacing:0">27/02/2022 15:40</span>
<span class="t c" style="left:1680px;top:509px;letter-spacing:1.3px">_/_/___ _:_</span>
<div class="pill" style="top:501.00px"><span class="t"><span class="y">MAH0000</span><span class="cy">23</span><span class="gx">XX</span></span></div>
<svg style="left:73.5px;top:542.70px" width="18" height="18" viewBox="0 0 18 18"><ellipse cx="8.4" cy="6.6" rx="8.15" ry="6.5" fill="#0e489f"/><path d="M9 12.5L14.3 16.8L13.8 9.5Z" fill="#0e489f"/><text x="8.4" y="10.5" text-anchor="middle" font-family="Liberation Sans, sans-serif" font-size="11" font-weight="700" fill="#fff">?</text></svg>
<svg style="left:261.5px;top:542.70px" width="18" height="18" viewBox="0 0 18 18"><ellipse cx="8.4" cy="6.6" rx="8.15" ry="6.5" fill="#0e489f"/><path d="M9 12.5L14.3 16.8L13.8 9.5Z" fill="#0e489f"/><text x="8.4" y="10.5" text-anchor="middle" font-family="Liberation Sans, sans-serif" font-size="11" font-weight="700" fill="#fff">i</text></svg>
<span class="t c" style="left:117px;top:548px;letter-spacing:-0.2px">186927</span>
<span class="t c" style="left:304px;top:548px;letter-spacing:-0.3px">Friends 7</span>
<span class="t c" style="left:459px;top:548px;letter-spacing:-0.17px">Television</span>
<span class="t c" style="left:614px;top:548px;letter-spacing:-0.2px">1234567890</span>
<span class="t c" style="left:924px;top:548px;letter-spacing:-0.28px">Friends</span>
<span class="t c" style="left:1079px;top:548px;letter-spacing:0">7</span>
<span class="t c" style="left:1214px;top:548px;letter-spacing:0">5</span>
<span class="t c" style="left:1348px;top:548px;letter-spacing:0">Maya Media Productions</span>
<span class="t c" style="left:1504px;top:548px;letter-spacing:0">27/02/2022 15:40</span>
<span class="t c" style="left:1680px;top:548px;letter-spacing:1.3px">_/_/___ _:_</span>
<div class="pill" style="top:539.00px"><span class="t"><span class="y">MAH0000</span><span class="cy">24</span><span class="gx">XX</span></span></div>
<svg style="left:73.5px;top:581.70px" width="18" height="18" viewBox="0 0 18 18"><ellipse cx="8.4" cy="6.6" rx="8.15" ry="6.5" fill="#0e489f"/><path d="M9 12.5L14.3 16.8L13.8 9.5Z" fill="#0e489f"/><text x="8.4" y="10.5" text-anchor="middle" font-family="Liberation Sans, sans-serif" font-size="11" font-weight="700" fill="#fff">?</text></svg>
<svg style="left:261.5px;top:581.70px" width="18" height="18" viewBox="0 0 18 18"><ellipse cx="8.4" cy="6.6" rx="8.15" ry="6.5" fill="#0e489f"/><path d="M9 12.5L14.3 16.8L13.8 9.5Z" fill="#0e489f"/><text x="8.4" y="10.5" text-anchor="middle" font-family="Liberation Sans, sans-serif" font-size="11" font-weight="700" fill="#fff">i</text></svg>
<span class="t c" style="left:117px;top:587px;letter-spacing:-0.2px">186926</span>
<span class="t c" style="left:304px;top:587px;letter-spacing:-0.3px">Friends 7</span>
<span class="t c" style="left:459px;top:587px;letter-spacing:-0.17px">Television</span>
<span class="t c" style="left:614px;top:587px;letter-spacing:-0.2px">1234567890</span>
<span class="t c" style="left:924px;top:587px;letter-spacing:-0.28px">Friends</span>
<span class="t c" style="left:1079px;top:587px;letter-spacing:0">7</span>
<span class="t c" style="left:1214px;top:587px;letter-spacing:0">4</span>
<span class="t c" style="left:1348px;top:587px;letter-spacing:0">Maya Media Productions</span>
<span class="t c" style="left:1504px;top:587px;letter-spacing:0">27/02/2022 15:40</span>
<span class="t c" style="left:1680px;top:587px;letter-spacing:1.3px">_/_/___ _:_</span>
<div class="pill" style="top:578.00px"><span class="t"><span class="y">MAH0000</span><span class="cy">25</span><span class="gx">XX</span></span></div>
<div class="gbox" style="left:752px;top:339px;width:168.5px;height:275px"></div>
<div class="tool"></div><div class="pager"></div>
<svg style="left:62px;top:709px" width="19" height="19" viewBox="0 0 19 19"><path d="M0.3 0.9H16.1V3.2H0.3Z" fill="#2cb8ea"/><path d="M0.8 3.2H15.6L9.7 8.8V14.6H7V8.8Z" fill="#96989b"/><rect x="6.8" y="14.3" width="3.1" height="2.3" rx="0.8" fill="#f6b91f"/><circle cx="13.1" cy="13.7" r="3.3" fill="#7fb93a"/><path d="M13.1 11.6V15.8M11 13.7H15.2" stroke="#fff" stroke-width="1.1"/></svg>
<span class="t" style="left:86.5px;top:716px">New range</span>
<svg style="left:150px;top:709px" width="19" height="19" viewBox="0 0 19 19"><path d="M0.3 0.9H16.1V3.2H0.3Z" fill="#2cb8ea"/><path d="M0.8 3.2H15.6L9.7 8.8V14.6H7V8.8Z" fill="#96989b"/><rect x="6.8" y="14.3" width="3.1" height="2.3" rx="0.8" fill="#f6b91f"/><path d="M9.6 15.3L14.6 9.4L16.6 11L11.6 16.9L9.2 17.5Z" fill="#f7941d"/><path d="M14.6 9.4L15.4 8.4L17.4 10L16.6 11Z" fill="#f4b183"/></svg>
<span class="t" style="left:174.5px;top:716px;letter-spacing:-0.14px">Change range</span>
<svg style="left:255px;top:709px" width="19" height="19" viewBox="0 0 19 19"><path d="M0.3 0.9H16.1V3.2H0.3Z" fill="#2cb8ea"/><path d="M0.8 3.2H15.6L9.7 8.8V14.6H7V8.8Z" fill="#96989b"/><rect x="6.8" y="14.3" width="3.1" height="2.3" rx="0.8" fill="#f6b91f"/><path d="M10.8 11.4L15.4 16M15.4 11.4L10.8 16" stroke="#c4161c" stroke-width="1.9"/></svg>
<span class="t" style="left:279.5px;top:716px;letter-spacing:-0.18px">Clear range</span>
<svg style="left:347px;top:709px" width="19" height="19" viewBox="0 0 19 19"><path d="M0.3 0.9H16.1V3.2H0.3Z" fill="#2cb8ea"/><path d="M0.8 3.2H15.6L9.7 8.8V14.6H7V8.8Z" fill="#96989b"/><rect x="6.8" y="14.3" width="3.1" height="2.3" rx="0.8" fill="#f6b91f"/><circle cx="13.3" cy="13.8" r="2.6" fill="none" stroke="#8d8f92" stroke-width="2" stroke-dasharray="1.5 0.9"/></svg>
<span class="t" style="left:371px;top:716px;letter-spacing:-0.2px">Preset range</span>
<div class="pc" style="left:60.1px"></div><svg style="left:67.3px;top:752.6px" width="9" height="8.4" viewBox="0 0 9 8.4"><path d="M0.2 0.3H2.2V8.1H0.2Z M8.6 0.2V8.2L2.2 4.2Z" fill="#fff"/></svg>
<div class="pc" style="left:88.2px"></div><svg style="left:96.6px;top:752.6px" width="8" height="8.4" viewBox="0 0 8 8.4"><path d="M7.6 0.2V8.2L0.6 4.2Z" fill="#fff"/></svg>
<span class="t" style="left:124.5px;top:751px;font-size:13px">1</span>
<div class="pc" style="left:143.2px;background:#1570d6"></div><span class="t" style="left:152.2px;top:750.5px;font-size:13px">2</span>
<span class="t" style="left:180.8px;top:751.5px;letter-spacing:-0.4px">Page</span>
<div style="left:214px;top:745px;width:34px;height:24px;background:#fff;border-radius:3px"></div><span class="t" style="left:221px;top:750.5px;font-size:12px;color:#2e2e2e">2</span>
<span class="t" style="left:254.5px;top:751.5px;letter-spacing:0.3px">of 2</span>
<div class="pc" style="left:287px"></div><svg style="left:296px;top:752px" width="8" height="9" viewBox="0 0 8 9"><path d="M0.8 0.5V8.5L7.4 4.5Z" fill="#b9b9b9"/></svg>
<div class="pc" style="left:315.1px"></div><svg style="left:323px;top:751.5px" width="10" height="10" viewBox="0 0 10 10"><path d="M7.4 0.8H9.2V9.2H7.4Z M0.8 0.8V9.2L7 5Z" fill="#a9a9a9"/></svg>
<div style="left:354px;top:744.6px;width:58.5px;height:24.4px;border-radius:3px;background:linear-gradient(#413f3e,#2e2c2b);border:1px solid #211f1e"></div><div style="left:354px;top:745px;width:34px;height:24px;background:#fff;border-radius:3px 0 0 3px"></div><span class="t" style="left:361px;top:750.5px;font-size:12px;color:#2e2e2e;letter-spacing:-0.3px">20</span>
<svg style="left:395.5px;top:754.5px" width="10" height="7"><path d="M0.3 0.3H9.7L5 6.7Z" fill="#fff"/></svg>
<span class="t" style="left:419.5px;top:751.5px">items per page</span>
<span class="t" style="left:1697px;top:751.5px">21 - 25 of 25 items</span>
<div class="pc" style="left:1808.8px"></div><svg style="left:1814.4px;top:748.6px" width="17" height="17" viewBox="0 0 17 17"><path d="M0.5 2H14.5L9.3 8V14.9L6.3 13.3V8Z" fill="#fff"/><path d="M4.2 -0.6L16.2 10.4" stroke="#2a2726" stroke-width="3"/><path d="M4.8 0.9L15.5 10" stroke="#fff" stroke-width="1.3"/></svg>
<div class="pc" style="left:1835.6px"></div><svg style="left:1839.5px;top:749.5px" width="17" height="17" viewBox="0 0 17 17"><path d="M13.6 7.4A5.6 5.6 0 1 1 8 3.4" fill="none" stroke="#fff" stroke-width="2.3"/><path d="M7.6 0L13.2 3.6L7.6 7Z" fill="#fff"/></svg>
<div class="btn" style="left:56px;width:86px"></div>
<svg style="left:63px;top:780px" width="26" height="24" viewBox="0 0 26 24"><path d="M1.8 12L11.5 3.1V7.3H24V16.7H11.5V20.9Z" fill="none" stroke="#2cb8ea" stroke-width="1.8" stroke-linejoin="miter"/></svg>
<span class="t" style="left:89.7px;top:786px;letter-spacing:-0.2px">Previous</span>
<div class="btn" style="left:149px;width:167.5px"></div>
<svg style="left:156px;top:780px" width="26" height="24" viewBox="0 0 26 24"><path d="M24.2 12L14.5 3.1V7.3H2V16.7H14.5V20.9Z" fill="none" stroke="#f6b91f" stroke-width="1.8" stroke-linejoin="miter"/></svg>
<span class="t" style="left:183px;top:786px;letter-spacing:-0.02px">Update Media numbers</span>
<div style="left:270px;top:854.5px;width:1380px;height:1.6px;background:#e6e6e6"></div>
<div class="dot" style="left:274.2px;background:#0f536b"></div>
<span class="t" style="left:210.5px;top:865.7px;font-size:15.2px;letter-spacing:-0.343px;font-weight:700;color:#8b8d90;-webkit-text-stroke:.35px #8b8d90;">RANGE SELECTION</span>
<div class="dot" style="left:726.7px;background:#0f536b"></div>
<span class="t" style="left:644.8px;top:865.7px;font-size:15.2px;letter-spacing:0.209px;font-weight:700;color:#8b8d90;-webkit-text-stroke:.35px #8b8d90;">MEDIA NUMBER SETUP</span>
<div class="dot" style="left:1179.0px;background:#2cbbe9"></div>
<span class="t" style="left:1138.6px;top:865.7px;font-size:15.2px;letter-spacing:0.463px;font-weight:700;color:#8b8d90;-webkit-text-stroke:.35px #8b8d90;">VALIDATION</span>
<div class="dot" style="left:1631.8px;background:#ebebeb"></div>
<span class="t" style="left:1611.1px;top:865.7px;font-size:15.2px;letter-spacing:-0.875px;font-weight:700;color:#8b8d90;-webkit-text-stroke:.35px #8b8d90;">RESULT</span>
<div style="left:49px;top:908px;width:72px;height:34px;border-radius:4px;background:linear-gradient(#3b3b3b 0%,#343434 47%,#2b2b2b 53%,#262626 100%);border:1px solid #232323"></div>
<svg style="left:57.7px;top:912.5px" width="24" height="24" viewBox="0 0 24 24"><circle cx="12" cy="12" r="9.7" fill="none" stroke="#e42b2d" stroke-width="3.1"/><path d="M5.2 5.2L18.8 18.8" stroke="#e42b2d" stroke-width="3.1"/></svg>
<span class="t" style="left:83.7px;top:919.5px;letter-spacing:-0.4px">Close</span>
<span class="t" style="left:836.8px;top:943px;font-size:10px;letter-spacing:-0.067px;-webkit-text-stroke:.35px #fff">Copyright © 2012 <i style="color:#8c8c8c;letter-spacing:-1.1px;-webkit-text-stroke:0">O<span class="y">O</span><span class="y" style="color:#2cb8ea">O</span></i><span class="y" style="color:#8c8c8c;-webkit-text-stroke:.3px #8c8c8c">NA.NET</span><span class="s" style="letter-spacing:0.053px"> ltd. All rights reserved.</span></span>
</body></html>
